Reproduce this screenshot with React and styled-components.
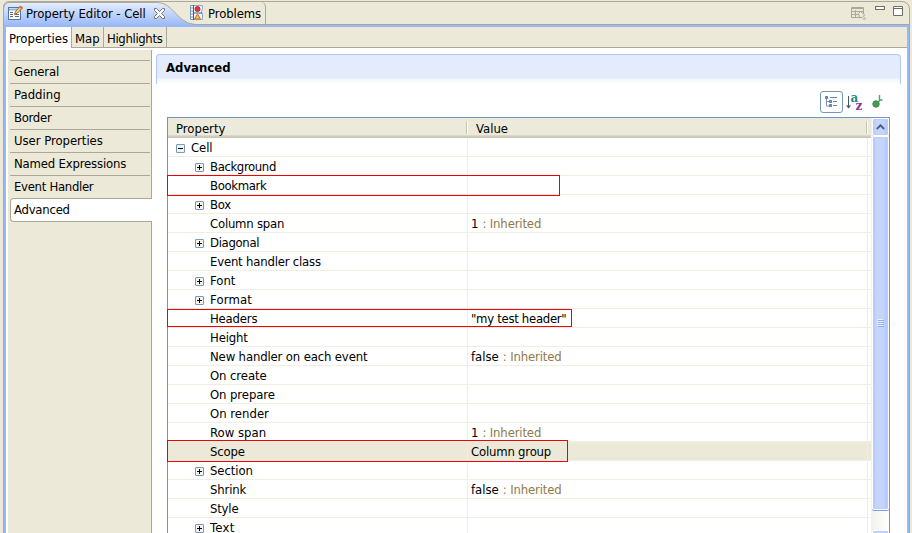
import React from "react";
import styled, { createGlobalStyle } from "styled-components";

const beige = "#ece9d8";
const gray = "#aca899";

const Global = createGlobalStyle`
  *, *::before, *::after { box-sizing: border-box; }
  body { margin: 0; overflow: hidden; background: ${beige}; }
  svg { flex: none; }
`;

const Window = styled.main`
  width: 912px;
  height: 533px;
  padding: 1px 2px 0 3px;
  overflow: hidden;
  background: ${beige};
  color: #000;
  font: 13px/19px "DejaVu Sans Condensed", "DejaVu Sans", sans-serif;
  font-stretch: condensed;
  white-space: nowrap;
`;

const View = styled.section`
  display: flex;
  flex-direction: column;
  height: 560px;
  border: 1px solid ${gray};
  border-radius: 6px 8px 0 0;
`;

const TitleBar = styled.header`
  position: relative;
  display: flex;
  height: 23px;
  flex: none;
  border-bottom: 1px solid ${gray};
`;

const TabShape = styled.svg`
  position: absolute;
  left: -1px;
  top: 0;
`;

const EditorTab = styled.div`
  position: relative;
  display: flex;
  align-items: center;
  width: 185px;
  padding-left: 4px;
  height: 22px;
`;

const ProblemsTab = styled(EditorTab)`
  width: 77px;
  padding-left: 1px;
  border-right: 1px solid ${gray};
  border-top-right-radius: 5px;
`;

const Text = styled.span`
  display: block;
  letter-spacing: ${(p) => p.$ls || 0}px;
`;

const TabTitle = styled(Text)`
  margin: 1px 8px 0 ${(p) => p.$gap}px;
`;

const WindowTools = styled.div`
  display: flex;
  margin-left: auto;
  padding: 4px 6px 0 0;
  gap: 8px;
`;

const Frame = styled.div`
  display: flex;
  flex-direction: column;
  flex: 1;
  border: 2px solid #99b8f8;
  background: #fff;
`;

const PageTabs = styled.nav`
  display: flex;
  height: 21px;
  flex: none;
  background: linear-gradient(${gray}, ${gray}) bottom / 100% 1px no-repeat ${beige};
`;

const PageTab = styled.div`
  width: ${(p) => p.$w}px;
  height: ${(p) => (p.$active ? 21 : 20)}px;
  padding: 2px 0 0 3px;
  background: ${(p) => (p.$active ? "#fff" : beige)};
  border-right: 1px solid ${gray};
`;

const Body = styled.div`
  display: flex;
  flex: 1;
  padding-top: 2px;
`;

const Sidebar = styled.aside`
  width: 144px;
  flex: none;
  margin-left: 2px;
  padding: 10px 1px 0 2px;
  background: ${beige};
  box-shadow: inset -1px 0 ${gray};
`;

const SideItem = styled.div`
  height: 23px;
  padding: 1px 0 0 4px;
  border-top: 1px solid ${gray};
  margin-right: 1px;
`;

const SideItemActive = styled(SideItem)`
  height: 24px;
  background: #fff;
  border: 1px solid ${gray};
  border-right: 0;
  border-radius: 4px 0 0 4px;
  margin-right: -1px;
  padding-left: 3px;
`;

const Content = styled.div`
  flex: 1;
  padding: 4px 6px 0 4px;
`;

const SectionTitle = styled.h1`
  height: 30px;
  margin: 0;
  padding: 3px 0 0 9px;
  border: 1px solid #b0c8f8;
  border-bottom: 0;
  border-radius: 4px 4px 0 0;
  background: linear-gradient(#e4ebfc 0 23px, #f1f5fe 24px, #fff 29px);
  font: inherit;
  font-weight: bold;
`;

const Toolbar = styled.div`
  display: flex;
  justify-content: flex-end;
  align-items: center;
  height: 24px;
  margin-top: 6px;
  padding-right: 18px;
`;

const ToggleButton = styled.button`
  display: grid;
  place-items: center;
  width: 23px;
  height: 22px;
  margin-right: 3px;
  padding: 0;
  border: 1px solid #7a98af;
  border-radius: 3px;
  background: #fff;
`;

const TreeBox = styled.div`
  position: relative;
  display: flex;
  width: 723px;
  height: 450px;
  margin: 3px 0 0 11px;
  border: 1px solid #7595bd;
`;

const Grid = styled.div`
  width: 703px;
`;

const GridHead = styled.div`
  display: grid;
  grid-template-columns: 300px 400px 1fr;
  height: 20px;
  background: linear-gradient(#ebeadb 0 17px, #e2decd 17px, #d6d2c2 18px, #cbc7b8 19px);
`;

const HeadCell = styled.div`
  position: relative;
  padding-left: 8px;
  padding-top: 1px;
  &::after {
    content: "";
    position: absolute;
    right: 0;
    top: 3px;
    width: 2px;
    height: 13px;
    border-left: 1px solid #c7c5b2;
    background: #fff;
  }
`;

const Row = styled.div`
  display: grid;
  grid-template-columns: 299px 1px 399px 1px 1fr;
  height: 19px;
  border-bottom: 1px solid #f0eee1;
  background: ${(p) => (p.$selected ? beige : "#fff")};
`;

const RowLabel = styled.div`
  display: flex;
  align-items: center;
  height: 19px;
  gap: 5px;
  padding-left: ${(p) => (p.$level ? 26 : 7)}px;
`;

const Divider = styled.div`
  background: #f0eee1;
`;

const Value = styled.div`
  display: flex;
  padding-left: 3px;
  height: 19px;
`;

const Inherited = styled(Text)`
  margin-left: 4px;
  color: #8e7a48;
`;

const Expander = styled.svg`
  width: 11px;
  height: 11px;
  padding: 1px;
  margin-top: 2px;
`;

const ExpanderSpace = styled.span`
  width: 11px;
  flex: none;
`;

const Highlight = styled.div`
  position: absolute;
  left: -1px;
  top: ${(p) => p.$top}px;
  width: ${(p) => p.$w}px;
  height: ${(p) => p.$h}px;
  border: 1px solid #f00000;
`;

const Scrollbar = styled.div`
  width: 18px;
  background: linear-gradient(90deg, #f2f1eb, #fff);
  border-left: 1px solid #f2f1eb;
`;

const ScrollPart = styled.div`
  display: grid;
  place-items: center;
  width: 17px;
  height: ${(p) => p.$h}px;
  margin-bottom: ${(p) => p.$gap || 0}px;
  border: 1px solid #fff;
  border-radius: 2px;
  background: linear-gradient(90deg, #b4c8f6, #c6d6fd 25%, #c4d3fc 70%, #adc4f8);
  box-shadow: inset 0 0 0 1px #bccdf8, 0 1px 0 ${(p) => p.$edge || "#bccdf8"};
`;

const PageIcon = () => (
  <svg width="15" height="16" viewBox="0 0 15 16">
    <rect x=".5" y="2.5" width="12" height="12" fill="#fff" stroke="#55779d" />
    <path d="M1 4.5h11" stroke="#8bb2dc" strokeWidth="2" />
    <path d="M2 7.5h3M2 9.5h3M2 11.5h3M7 9.5h4M7 11.5h4" stroke="#567087" />
    <path d="M6.5 9.5l1-3 5-5.5 2 2-5 5z" fill="#f3cf6d" stroke="#9a6a33" />
    <path d="M12 1.5l2 2" stroke="#de6c57" strokeWidth="2" />
  </svg>
);

const CloseIcon = () => (
  <svg width="11" height="11" viewBox="0 0 11 11">
    <path d="M.5.5h2l3 3 3-3h2v2l-3 3 3 3v2h-2l-3-3-3 3h-2v-2l3-3-3-3z" fill="#fff" stroke="#777466" />
  </svg>
);

const ProblemsIcon = () => (
  <svg width="14" height="16" viewBox="0 0 14 16">
    <path d="M.5.5h3v14h-3z" fill="#fff" stroke="#7897be" />
    <path d="M3.5.5h9v3l-1 3v2h1v6h-9z" fill="#eef4ff" stroke="#90a6c9" />
    <path d="M3.5 0v15M4 8h8" stroke="#3b6396" />
    <circle cx="7.5" cy="4" r="2.5" fill="#dd3838" stroke="#b52a35" />
    <path d="M7.5 9l3 5h-6z" fill="#ffc344" stroke="#c16e25" />
    <path d="M1 3h2M1 6h2M1 9h2M1 12h2" stroke="#778daa" />
  </svg>
);

const FilterIcon = () => (
  <svg width="16" height="15" viewBox="0 0 16 15">
    <path d="M.5 1.5h12v10H.5zM0 2.5h13M1 5.5h11M1 8.5h6M4.5 4v8" fill="none" stroke={gray} />
    <path d="M7.5 7.5l2-2 4 3-1 2 2 2-1 1.5-3-3-2 1z" fill={beige} stroke={gray} />
  </svg>
);

const MinimizeIcon = () => (
  <svg width="10" height="11" viewBox="0 0 10 11">
    <rect x=".5" y=".5" width="9" height="3" fill="#fff" stroke="#706e62" />
  </svg>
);

const MaximizeIcon = () => (
  <svg width="10" height="11" viewBox="0 0 10 11">
    <path d="M.5.5h9v9h-9zM1 2.5h8" fill="#fff" stroke="#706e62" />
  </svg>
);

const TreeIcon = () => (
  <svg width="13" height="12" viewBox="0 0 13 12">
    <path d="M1.5 2v8h3M2 5.5h3" fill="none" stroke="#7d91ab" />
    <path d="M.5.5h2v2h-2zM4.5 4.5h2v2h-2zM4.5 8.5h2v2h-2z" fill="#86a3cb" stroke="#5a75a8" />
    <path d="M5 1.5h7M8 5.5h4M8 9.5h4" stroke="#6a84b5" />
  </svg>
);

const SortFrame = styled.svg`
  overflow: visible;
  margin-right: 9px;
`;

const SortGlyph = styled.text`
  font: bold 12px "DejaVu Serif", serif;
  fill: ${(p) => p.$c};
`;

const SortIcon = () => (
  <SortFrame width="17" height="18" viewBox="0 0 17 18">
    <path d="M2.5 3v11" stroke="#44546c" />
    <path d="M0 12.5h5l-2.5 3z" fill="#44546c" />
    <SortGlyph x="4.5" y="9" $c="#258b85">a</SortGlyph>
    <SortGlyph x="9.5" y="16.5" $c="#8c328f">z</SortGlyph>
  </SortFrame>
);

const LocalIcon = () => (
  <svg width="11" height="15" viewBox="0 0 11 15">
    <path d="M7.5 0v5M6 7.5l2-2.5h2.5" fill="none" stroke="#4aa860" strokeWidth="1.4" />
    <circle cx="4" cy="9" r="3.2" fill="#459a56" stroke="#3b8a4b" />
  </svg>
);

const ExpandBox = ({ open }) => (
  <Expander viewBox="0 0 9 9">
    <rect x=".5" y=".5" width="8" height="8" rx=".5" fill="#f4f2ed" stroke="#7898b5" />
    <path d={open ? "M2 4.5h5" : "M2 4.5h5M4.5 2v5"} stroke="#000" />
  </Expander>
);

const sections = [
  { name: "General", ls: -0.15 },
  { name: "Padding" },
  { name: "Border", ls: -0.3 },
  { name: "User Properties", ls: -0.04 },
  { name: "Named Expressions", ls: -0.18 },
  { name: "Event Handler", ls: -0.3 },
];

const rows = [
  { name: "Cell", open: true, root: true, ls: -0.1 },
  { name: "Background", group: true, ls: -0.38 },
  { name: "Bookmark", ls: -0.35 },
  { name: "Box", group: true, ls: -0.3 },
  { name: "Column span", value: "1", inherited: true, ls: -0.22 },
  { name: "Diagonal", group: true, ls: -0.33 },
  { name: "Event handler class", ls: -0.2 },
  { name: "Font", group: true },
  { name: "Format", group: true, ls: 0.15 },
  { name: "Headers", value: '"my test header"', valueLs: -0.3, ls: -0.2 },
  { name: "Height", ls: -0.15 },
  { name: "New handler on each event", value: "false", inherited: true, ls: -0.15 },
  { name: "On create", ls: -0.1 },
  { name: "On prepare", ls: -0.1 },
  { name: "On render" },
  { name: "Row span", value: "1", inherited: true },
  { name: "Scope", value: "Column group", valueLs: -0.2, selected: true, ls: -0.2 },
  { name: "Section", group: true, ls: -0.1 },
  { name: "Shrink", value: "false", inherited: true, ls: -0.15 },
  { name: "Style", ls: -0.2 },
  { name: "Text", group: true, ls: 0.3 },
];

const PropertyRow = ({ row }) => (
  <Row $selected={row.selected}>
    <RowLabel $level={row.root ? 0 : 1}>
      {row.group || row.root ? <ExpandBox open={row.open} /> : <ExpanderSpace />}
      <Text $ls={row.ls}>{row.name}</Text>
    </RowLabel>
    <Divider />
    <Value>
      {row.value && <Text $ls={row.valueLs}>{row.value}</Text>}
      {row.inherited && <Inherited $ls={-0.15}>: Inherited</Inherited>}
    </Value>
    <Divider />
  </Row>
);

export default function App() {
  return (
    <Window>
      <Global />
      <View>
        <TitleBar>
          <TabShape width="196" height="23" viewBox="0 0 196 23">
            <defs>
              <linearGradient id="tab" x1="0" x2="0" y1="0" y2="1">
                <stop offset="0" stopColor="#e5edff" />
                <stop offset="1" stopColor="#99b8f8" />
              </linearGradient>
            </defs>
            <path d="M.5 24V7Q1 0 8 .5H154C171 .5 173 21 192 22.5V24z" fill="url(#tab)" stroke={gray} />
          </TabShape>
          <EditorTab>
            <PageIcon />
            <TabTitle $gap={3} $ls={-0.07}>Property Editor - Cell</TabTitle>
            <CloseIcon />
          </EditorTab>
          <ProblemsTab>
            <ProblemsIcon />
            <TabTitle $gap={4} $ls={-0.1}>Problems</TabTitle>
          </ProblemsTab>
          <WindowTools>
            <FilterIcon />
            <MinimizeIcon />
            <MaximizeIcon />
          </WindowTools>
        </TitleBar>
        <Frame>
          <PageTabs>
            <PageTab $w={66} $active><Text>Properties</Text></PageTab>
            <PageTab $w={32}><Text>Map</Text></PageTab>
            <PageTab $w={63}><Text $ls={-0.35}>Highlights</Text></PageTab>
          </PageTabs>
          <Body>
            <Sidebar>
              {sections.map((s) => (
                <SideItem key={s.name}><Text $ls={s.ls}>{s.name}</Text></SideItem>
              ))}
              <SideItemActive><Text $ls={-0.25}>Advanced</Text></SideItemActive>
            </Sidebar>
            <Content>
              <SectionTitle>Advanced</SectionTitle>
              <Toolbar>
                <ToggleButton><TreeIcon /></ToggleButton>
                <SortIcon />
                <LocalIcon />
              </Toolbar>
              <TreeBox>
                <Grid>
                  <GridHead>
                    <HeadCell>Property</HeadCell>
                    <HeadCell>Value</HeadCell>
                  </GridHead>
                  {rows.map((row) => (
                    <PropertyRow key={row.name} row={row} />
                  ))}
                </Grid>
                <Scrollbar>
                  <ScrollPart $h={18}>
                    <svg width="9" height="6" viewBox="0 0 9 6">
                      <path d="M.8 5l3.7-3.7L8.2 5" fill="none" stroke="#4d6185" strokeWidth="2" />
                    </svg>
                  </ScrollPart>
                  <ScrollPart $h={374} $gap={20} $edge="#799fe0">
                    <svg width="8" height="8" viewBox="0 0 8 8">
                      <path d="M0 .5h6M0 2.5h6M0 4.5h6M0 6.5h6" stroke="#eef4fe" />
                      <path d="M1 1.5h6M1 3.5h6M1 5.5h6M1 7.5h6" stroke="#8cb0f8" />
                    </svg>
                  </ScrollPart>
                  <ScrollPart $h={18} />
                </Scrollbar>
                <Highlight $top={57} $w={393} $h={21} />
                <Highlight $top={191} $w={405} $h={18} />
                <Highlight $top={322} $w={401} $h={22} />
              </TreeBox>
            </Content>
          </Body>
        </Frame>
      </View>
    </Window>
  );
}
